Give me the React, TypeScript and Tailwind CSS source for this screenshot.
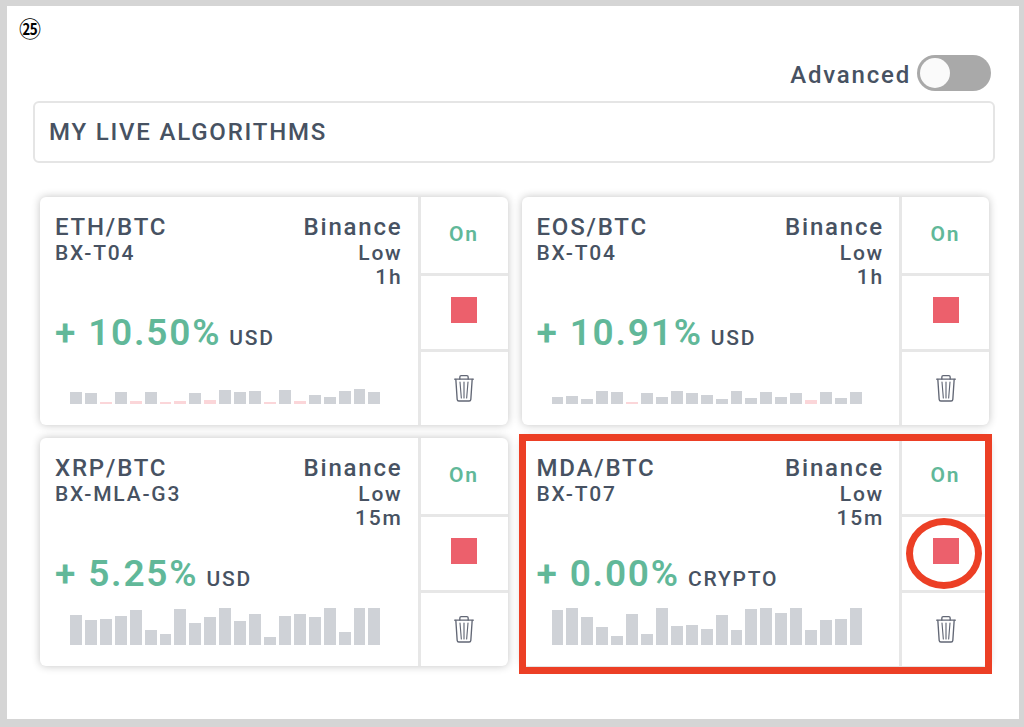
import React from 'react';

type Algorithm = {
  pair: string;
  model: string;
  exchange: string;
  risk: string;
  interval: string;
  change: string;
  currency: string;
  // negative values are drawn as pink bars
  history: number[];
  highlighted?: boolean;
};

const algorithms: Algorithm[] = [
  {
    pair: 'ETH/BTC',
    model: 'BX-T04',
    exchange: 'Binance',
    risk: 'Low',
    interval: '1h',
    change: '+ 10.50%',
    currency: 'USD',
    history: [12, 11, -2, 12, -3, 12, -2, -3, 11, -4, 14, 12, 13, -2, 14, -3, 9, 7, 13, 15, 12],
  },
  {
    pair: 'EOS/BTC',
    model: 'BX-T04',
    exchange: 'Binance',
    risk: 'Low',
    interval: '1h',
    change: '+ 10.91%',
    currency: 'USD',
    history: [7, 8, 5, 13, 12, -2, 11, 7, 13, 11, 9, 5, 13, 6, 12, 7, 11, -4, 12, 6, 12],
  },
  {
    pair: 'XRP/BTC',
    model: 'BX-MLA-G3',
    exchange: 'Binance',
    risk: 'Low',
    interval: '15m',
    change: '+ 5.25%',
    currency: 'USD',
    history: [30, 25, 26, 29, 35, 15, 11, 36, 22, 28, 37, 24, 31, 8, 29, 31, 28, 37, 13, 37, 37],
  },
  {
    pair: 'MDA/BTC',
    model: 'BX-T07',
    exchange: 'Binance',
    risk: 'Low',
    interval: '15m',
    change: '+ 0.00%',
    currency: 'CRYPTO',
    history: [35, 37, 28, 18, 9, 31, 11, 37, 19, 20, 16, 30, 15, 36, 37, 32, 37, 15, 25, 26, 37],
    highlighted: true,
  },
];

const TrashIcon: React.FC = () => (
  <svg
    className="h-[27px] w-5"
    viewBox="0 0 60 81"
    fill="none"
    stroke="#626775"
    strokeWidth="4"
    strokeLinecap="round"
    strokeLinejoin="round"
    aria-hidden="true"
  >
    <path d="M2 12.5h56" />
    <path d="M17.500 12V6q0-4 4-4h17q4 0 4 4v6" />
    <path d="M5.500 13l4 60q.4 5 5 5h31q4.600 0 5-5l4-60" />
    <path d="M18 21l4 48M30 21v48M42 21l-4 48" strokeWidth="3.4" />
  </svg>
);

const HistoryBars: React.FC<{ values: number[] }> = ({ values }) => (
  <div className="mt-3 mr-[22px] ml-[15px] flex h-[37px] items-end gap-[3px]">
    {values.map((value, i) => (
      <div
        key={i}
        className={value < 0 ? 'flex-1 bg-[#fbd6d9]' : 'flex-1 bg-[#cfd2d7]'}
        style={{ height: Math.abs(value) }}
      />
    ))}
  </div>
);

const AlgorithmCard: React.FC<{ algorithm: Algorithm }> = ({ algorithm }) => (
  <article className="relative flex rounded-md bg-white shadow-[0_0_9px_rgba(0,0,0,0.24)]">
    <div className="min-w-0 flex-1 px-[15px] pt-4 pb-[21px]">
      <div className="flex justify-between">
        <div>
          <h2 className="text-[24px] leading-7">{algorithm.pair}</h2>
          <p className="text-[21px] leading-6">{algorithm.model}</p>
        </div>
        <div className="text-right">
          <p className="text-[24px] leading-7">{algorithm.exchange}</p>
          <p className="text-[21px] leading-6">{algorithm.risk}</p>
          <p className="text-[21px] leading-6">{algorithm.interval}</p>
        </div>
      </div>
      <p className="mt-[22px] flex items-baseline gap-2">
        <span className="text-[37px] leading-[44px] font-semibold text-[#61b899]">{algorithm.change}</span>
        <span className="text-[21px] leading-6">{algorithm.currency}</span>
      </p>
      <HistoryBars values={algorithm.history} />
    </div>

    <div className="grid w-[90px] grid-rows-3 border-l-[3px] border-[#e7e7e7]">
      <button type="button" className="text-[21px] font-semibold text-[#61b899]">
        On
      </button>
      <div className="relative flex border-t-[3px] border-[#e7e7e7]">
        <button type="button" aria-label="Stop" className="flex flex-1 items-center justify-center pb-[6px]">
          <span className="size-[26px] bg-[#ec606c]" />
        </button>
        {algorithm.highlighted && (
          <span className="pointer-events-none absolute inset-y-px right-[7px] left-[4px] rounded-[50%] border-[7px] border-[#ec3f25]" />
        )}
      </div>
      <button
        type="button"
        aria-label="Delete"
        className="flex items-center justify-center border-t-[3px] border-[#e7e7e7]"
      >
        <TrashIcon />
      </button>
    </div>

    {algorithm.highlighted && (
      <span className="pointer-events-none absolute -inset-x-[3px] -top-1 -bottom-2 border-[7px] border-[#ec3f25]" />
    )}
  </article>
);

export default function App() {
  return (
    <div className="flex min-h-screen bg-[#d5d5d5] pt-[6px] pr-[5px] pb-2 pl-[7px] font-['Roboto',sans-serif] text-[24px] font-medium tracking-[0.075em] text-[#475262]">
      <main className="min-w-0 flex-1 bg-white pt-2">
        <p className="pl-3 font-['Noto_Sans_CJK_JP',sans-serif] text-[22px] leading-[26px] font-medium tracking-normal text-black">
          ㉕
        </p>

        <div className="pt-[15px] pr-6 pb-[53px] pl-[26px]">
          <label className="mr-1 flex items-end justify-end gap-[6px] leading-8">
            Advanced
            <input
              type="checkbox"
              role="switch"
              className="flex h-9 w-[74px] appearance-none items-center rounded-full bg-[#a9a9a9] px-[3px] before:size-[30px] before:rounded-full before:bg-[#fafafa] checked:justify-end"
            />
          </label>

          <h1 className="mt-[10px] rounded-md border-2 border-[#e5e5e5] px-[14px] leading-[58px]">
            MY LIVE ALGORITHMS
          </h1>

          <div className="mt-[34px] mr-[6px] ml-[7px] grid grid-cols-2 gap-x-[14px] gap-y-[13px]">
            {algorithms.map((algorithm) => (
              <AlgorithmCard key={algorithm.pair} algorithm={algorithm} />
            ))}
          </div>
        </div>
      </main>
    </div>
  );
}
